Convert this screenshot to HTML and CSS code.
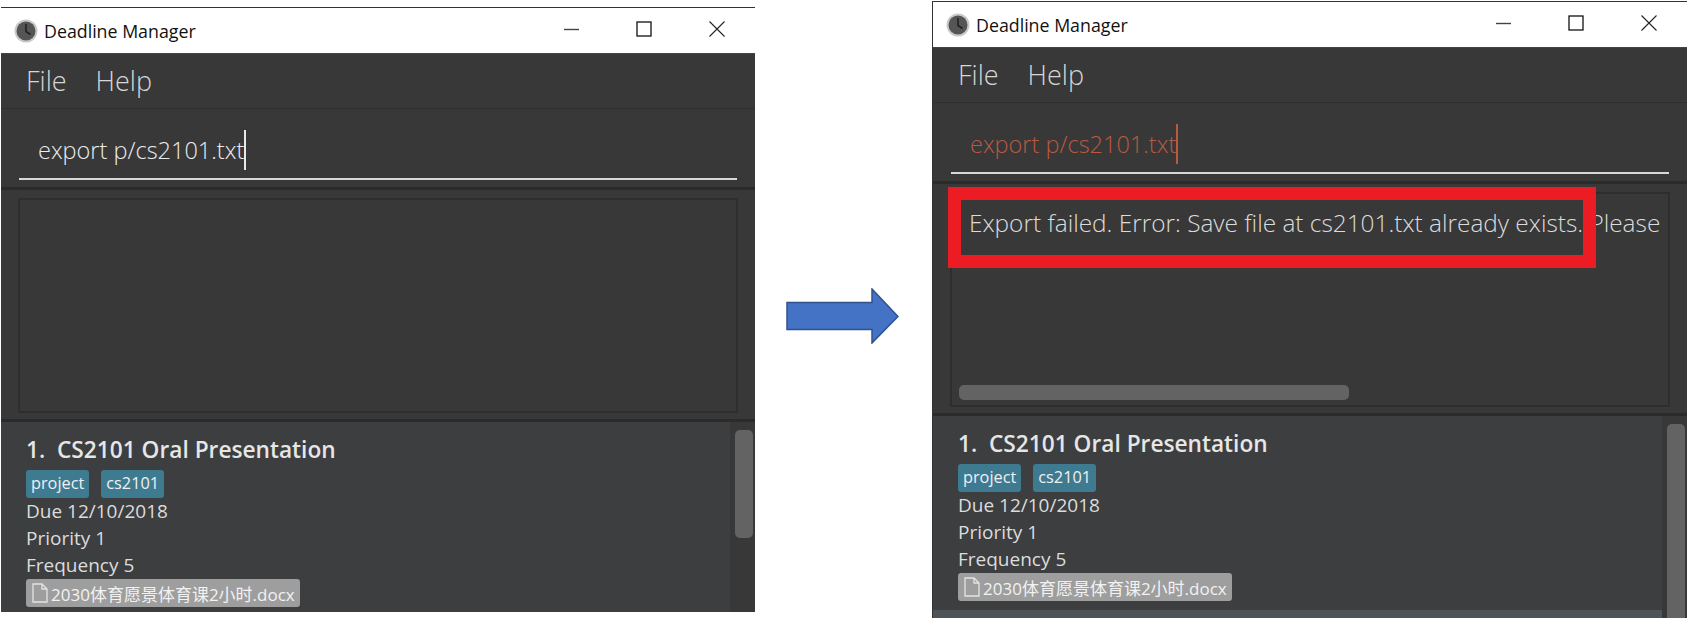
FILE: index.html
```html
<!DOCTYPE html>
<html lang="en">
<head>
<meta charset="utf-8">
<title>Deadline Manager</title>
<link rel="stylesheet" href="styles.css">
</head>
<body>
<main class="stage">
  <section class="window window--before">
    <header class="titlebar">
      <svg class="app-icon" viewBox="0 0 24 24"><circle cx="12" cy="12" r="11.5" fill="#c9c9c9"/><circle cx="12" cy="12" r="9.5" fill="#555"/><path d="M12 5v7.5l4.5 3" fill="none" stroke="#222" stroke-width="1.6"/></svg>
      <span class="title">Deadline Manager</span>
      <svg class="ctl ctl--min" viewBox="0 0 16 16"><path d="M0 7.5h15" stroke="#444" stroke-width="1.4"/></svg>
      <svg class="ctl ctl--max" viewBox="0 0 16 16"><rect x="1" y="1" width="14" height="14" fill="none" stroke="#111" stroke-width="1.3"/></svg>
      <svg class="ctl ctl--close" viewBox="0 0 16 16"><path d="M.5.5l15 15M15.500.5l-15 15" stroke="#222" stroke-width="1.1"/></svg>
    </header>
    <nav class="menu"><span>File</span><span>Help</span></nav>
    <div class="command">
      <div class="input"><span class="typed">export p/cs2101.txt</span><i class="caret"></i></div>
    </div>
    <div class="result"><div class="result-box"></div></div>
    <div class="list">
      <div class="cards">
        <article class="card">
          <h2 class="card-title">1.&nbsp; CS2101 Oral Presentation</h2>
          <div class="tags"><span class="tag">project</span><span class="tag">cs2101</span></div>
          <p class="line">Due 12/10/2018</p>
          <p class="line">Priority 1</p>
          <p class="line">Frequency 5</p>
          <div class="doc"><svg class="doc-icon" viewBox="0 0 16 20"><path d="M1 1h9l5 5v13H1z M10 1v5h5" fill="none" stroke="#e4e4e4" stroke-width="1.3"/></svg><span>2030体育愿景体育课2小时.docx</span></div>
        </article>
      </div>
      <div class="track"><div class="thumb"></div></div>
    </div>
  </section>

  <svg class="arrow" viewBox="0 0 113 56"><path d="M1 14.500h85V1l26 27.500L86 55V41.500H1z" fill="#4472c4" stroke="#2f528f" stroke-width="1.500"/></svg>

  <section class="window window--after">
    <header class="titlebar">
      <svg class="app-icon" viewBox="0 0 24 24"><circle cx="12" cy="12" r="11.5" fill="#c9c9c9"/><circle cx="12" cy="12" r="9.5" fill="#555"/><path d="M12 5v7.5l4.5 3" fill="none" stroke="#222" stroke-width="1.6"/></svg>
      <span class="title">Deadline Manager</span>
      <svg class="ctl ctl--min" viewBox="0 0 16 16"><path d="M0 7.5h15" stroke="#444" stroke-width="1.4"/></svg>
      <svg class="ctl ctl--max" viewBox="0 0 16 16"><rect x="1" y="1" width="14" height="14" fill="none" stroke="#111" stroke-width="1.3"/></svg>
      <svg class="ctl ctl--close" viewBox="0 0 16 16"><path d="M.5.5l15 15M15.500.5l-15 15" stroke="#222" stroke-width="1.1"/></svg>
    </header>
    <nav class="menu"><span>File</span><span>Help</span></nav>
    <div class="command">
      <div class="input input--error"><span class="typed">export p/cs2101.txt</span><i class="caret"></i></div>
    </div>
    <div class="result">
      <div class="result-box">
        <p class="message">Export failed. Error: Save file at cs2101.txt already exists. Please</p>
        <div class="hbar"></div>
      </div>
      <div class="highlight"></div>
    </div>
    <div class="list">
      <div class="cards">
        <article class="card">
          <h2 class="card-title">1.&nbsp; CS2101 Oral Presentation</h2>
          <div class="tags"><span class="tag">project</span><span class="tag">cs2101</span></div>
          <p class="line">Due 12/10/2018</p>
          <p class="line">Priority 1</p>
          <p class="line">Frequency 5</p>
          <div class="doc"><svg class="doc-icon" viewBox="0 0 16 20"><path d="M1 1h9l5 5v13H1z M10 1v5h5" fill="none" stroke="#e4e4e4" stroke-width="1.3"/></svg><span>2030体育愿景体育课2小时.docx</span></div>
        </article>
        <div class="card-next"></div>
      </div>
      <div class="track"><div class="thumb thumb--long"></div></div>
    </div>
  </section>
</main>
</body>
</html>
```
FILE: styles.css
```css
* { box-sizing: border-box; }
html, body { margin: 0; height: 618px; overflow: hidden; background: #fff; }
body { font-family: "Open Sans", "Noto Sans CJK SC", sans-serif; }

.stage { display: flex; align-items: flex-start; height: 618px; overflow: hidden; }

.window {
  flex: none;
  display: flex;
  flex-direction: column;
  background: #383838;
  border-top: 1px solid #333;
  overflow: hidden;
}
.window--before { width: 754px; margin: 7px 0 0 1px; height: 605px; }
.window--after { width: 755px; margin: 1px 0 0 33px; height: 617px; border-left: 1px solid #333; }

.arrow { flex: none; width: 113px; height: 56px; margin: 288px 0 0 31px; }

.titlebar {
  height: 46px;
  flex: none;
  display: flex;
  align-items: center;
  background: #fff;
  border-bottom: 1px solid #444;
  position: relative;
}
.app-icon { width: 24px; height: 24px; margin-left: 13px; flex: none; }
.title { margin-left: 6px; font-size: 17.800px; color: #111; }
.ctl { position: absolute; width: 16px; height: 16px; }
.ctl--min { left: 563px; top: 14px; }
.ctl--max { left: 635px; top: 13px; }
.ctl--close { left: 708px; top: 13px; }

.menu {
  height: 55px;
  flex: none;
  display: flex;
  align-items: center;
  gap: 29px;
  padding: 0 0 2px 25px;
  font-size: 27px;
  font-weight: 300;
  color: #d6d6d6;
  border-bottom: 1px solid #2e2e2e;
}

.command { height: 81px; flex: none; padding: 0 18px 0 18px; border-bottom: 3px solid #2b2b2b; }
.input {
  height: 71px;
  display: flex;
  align-items: center;
  padding: 12px 0 0 19px;
  font-size: 23.500px;
  font-weight: 300;
  color: #ececec;
  border-bottom: 2px solid #d8d8d8;
}
.caret { width: 2px; height: 40px; background: #e8e8e8; }
.input--error { color: #b85a42; }
.input--error .caret { background: #b85a42; }

.result {
  height: 232px;
  flex: none;
  padding: 8px 17px 6px 17px;
  border-bottom: 3px solid #2b2b2b;
  position: relative;
}
.result-box {
  height: 100%;
  border: 2px solid #2e2e2e;
  position: relative;
  overflow: hidden;
}
.message {
  margin: 0;
  padding: 13px 0 0 17px;
  font-size: 24.400px;
  line-height: 32px;
  font-weight: 300;
  color: #dcdcdc;
  white-space: nowrap;
}
.hbar {
  position: absolute;
  left: 7px;
  bottom: 5px;
  width: 390px;
  height: 15px;
  border-radius: 5px;
  background: #636363;
}
.highlight {
  position: absolute;
  left: 15px;
  top: 3px;
  width: 648px;
  height: 81px;
  border: 13px solid #ed1c24;
}

.list { flex: 1; display: flex; min-height: 0; overflow: hidden; }
.cards { width: 729px; flex: none; }
.card {
  height: 194px;
  background: #3c3e3f;
  padding: 12px 0 0 25px;
  color: #dcdcdc;
}
.card-next { height: 20px; background: #4d5356; }
.card-title { margin: 0; font-size: 22.700px; font-weight: 600; line-height: 32px; color: #e6e6e6; }
.tags { display: flex; gap: 12px; margin-top: 4px; }
.tag {
  height: 28px;
  line-height: 27px;
  padding: 0 5px;
  border-radius: 3px;
  background: #3e7b91;
  font-size: 16.300px;
  font-weight: 500;
  color: #f0f0f0;
}
.line { margin: 0; height: 27px; line-height: 27px; font-size: 19px; color: #dcdcdc; }
.doc {
  display: inline-flex;
  align-items: center;
  height: 28px;
  padding: 0 5px 0 6px;
  border-radius: 3px;
  background: #9e9e9e;
  font-size: 17px;
  color: #f2f2f2;
}
.doc-icon { width: 16px; height: 20px; margin-right: 3px; flex: none; }
.track { flex: 1; padding: 8px 2px 0 5px; }
.thumb { height: 108px; border-radius: 5px; background: #636363; }
.thumb--long { height: 400px; }
```
